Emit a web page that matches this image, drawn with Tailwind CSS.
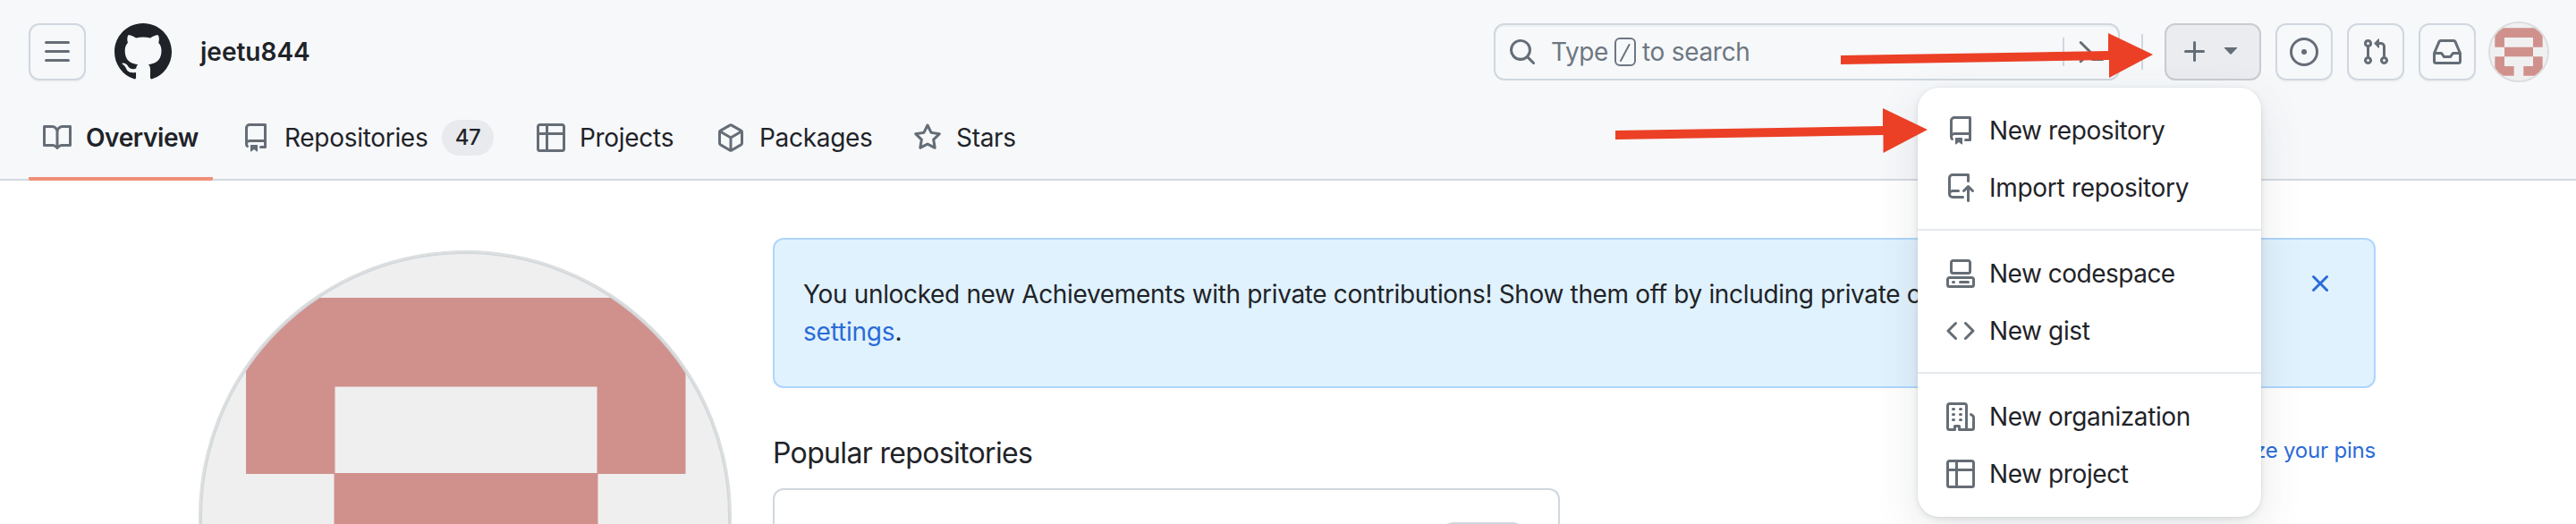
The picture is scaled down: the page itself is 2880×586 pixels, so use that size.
<!DOCTYPE html>
<html lang="en">
<head>
<meta charset="utf-8">
<title>jeetu844</title>
<script src="https://cdn.jsdelivr.net/npm/@tailwindcss/browser@4"></script>
</head>
<body class="relative w-[2880px] h-[586px] overflow-hidden bg-white text-[#1f2328] text-[28px] leading-[42px] font-['Inter',sans-serif]">
<svg class="hidden">
  <symbol id="repo" viewBox="0 0 16 16"><path d="M2 2.5A2.5 2.5 0 0 1 4.5 0h8.75a.75.75 0 0 1 .75.75v12.5a.75.75 0 0 1-.75.75h-2.5a.75.75 0 0 1 0-1.5h1.75v-2h-8a1 1 0 0 0-.714 1.7.75.75 0 1 1-1.072 1.05A2.495 2.495 0 0 1 2 11.5Zm10.500-1h-8a1 1 0 0 0-1 1v6.708A2.486 2.486 0 0 1 4.500 9h8ZM5 12.250a.25.25 0 0 1 .25-.25h3.500a.25.25 0 0 1 .25.25v3.250a.25.25 0 0 1-.4.200l-1.450-1.087a.249.249 0 0 0-.300 0L5.400 15.700a.25.25 0 0 1-.4-.200Z"/></symbol>
  <symbol id="table" viewBox="0 0 16 16"><path d="M0 1.750C0 .784.784 0 1.750 0h12.500C15.216 0 16 .784 16 1.750v12.500A1.750 1.750 0 0 1 14.250 16H1.750A1.750 1.750 0 0 1 0 14.250ZM6.500 6.500v8h7.750a.25.25 0 0 0 .25-.25V6.500Zm8-1.500V1.750a.25.25 0 0 0-.25-.25H6.500V5Zm-13 1.500v7.750c0 .138.112.25.25.25H5v-8ZM5 5V1.500H1.750a.25.25 0 0 0-.25.25V5Z"/></symbol>
</svg>

<header class="h-[202px] bg-[#f6f8fa] border-b-2 border-[#d3d9df] pt-[26px]">
  <div class="flex items-center h-16 pl-8 pr-8">
    <button class="size-16 shrink-0 rounded-xl border-2 border-[#d0d7de] flex items-center justify-center shadow-[0_2px_0_rgba(31,35,40,0.03)]">
      <svg class="size-8 fill-[#656d76]" viewBox="0 0 16 16"><path d="M1 2.750A.75.75 0 0 1 1.750 2h12.500a.75.75 0 0 1 0 1.500H1.750A.75.75 0 0 1 1 2.750Zm0 5A.75.75 0 0 1 1.750 7h12.500a.75.75 0 0 1 0 1.500H1.750A.75.75 0 0 1 1 7.750ZM1.750 12h12.500a.75.75 0 0 1 0 1.500H1.750a.75.75 0 0 1 0-1.500Z"/></svg>
    </button>
    <svg class="size-16 shrink-0 ml-8 fill-[#1f2328]" viewBox="0 0 16 16"><path d="M8 0c4.420 0 8 3.580 8 8a8.013 8.013 0 0 1-5.450 7.590c-.4.080-.55-.17-.55-.38 0-.27.010-1.130.010-2.200 0-.75-.25-1.230-.54-1.480 1.780-.2 3.650-.88 3.650-3.950 0-.88-.31-1.590-.82-2.150.080-.2.360-1.020-.080-2.120 0 0-.67-.22-2.200.82-.64-.18-1.320-.27-2-.27-.68 0-1.360.090-2 .27-1.530-1.030-2.200-.82-2.200-.82-.44 1.100-.16 1.920-.080 2.120-.51.560-.82 1.280-.82 2.150 0 3.060 1.860 3.750 3.640 3.950-.23.200-.44.550-.51 1.070-.46.210-1.610.550-2.330-.66-.15-.24-.6-.83-1.230-.82-.67.010-.27.380.010.530.340.190.730.900.820 1.130.160.450.680 1.310 2.690.940 0 .67.010 1.300.010 1.490 0 .21-.15.450-.55.380A7.995 7.995 0 0 1 0 8c0-4.420 3.580-8 8-8Z"/></svg>
    <span class="ml-8 font-semibold">jeetu844</span>

    <div class="ml-auto flex items-center">
      <div class="w-[700px] h-16 rounded-xl border-2 border-[#d0d7de] shadow-[inset_0_2px_0_rgba(208,215,222,0.2)] flex items-center pl-[14px] pr-[14px] text-[#6e7781]">
        <svg class="size-8 fill-[#656d76]" viewBox="0 0 16 16"><path d="M10.680 11.740a6 6 0 0 1-7.922-8.982 6 6 0 0 1 8.982 7.922l3.040 3.040a.749.749 0 0 1-.326 1.275.749.749 0 0 1-.734-.215ZM11.500 7a4.499 4.499 0 1 0-8.997 0A4.499 4.499 0 0 0 11.500 7Z"/></svg>
        <span class="ml-4 w-[71px] tracking-[-0.4px]">Type</span>
        <svg class="w-6 h-8 shrink-0" viewBox="0 0 24 32" fill="none" stroke="#6e7781" stroke-width="2"><rect x="1" y="1" width="22" height="30" rx="5"/><path d="M7 26 16.500 8" stroke-linecap="round"/></svg>
        <span class="ml-[7px] tracking-[-0.3px] whitespace-nowrap">to search</span>
        <span class="ml-auto w-0.5 h-8 bg-[#d0d7de]"></span>
        <svg class="size-8 ml-[14px] fill-[#656d76]" viewBox="0 0 16 16"><path d="m6.354 8.040-4.773 4.773a.75.75 0 1 0 1.061 1.060L7.945 8.570a.75.75 0 0 0 0-1.060L2.642 2.206a.75.75 0 0 0-1.060 1.061L6.353 8.040ZM8.750 11.500a.75.75 0 0 0 0 1.500h5.500a.75.75 0 0 0 0-1.500h-5.500Z"/></svg>
      </div>
      <span class="ml-6 w-0.5 h-10 bg-[#d0d7de]"></span>
      <button class="ml-6 w-[108px] h-16 rounded-xl border-2 border-[#c9cbd0] bg-[#ebecf0] flex items-center pl-4">
        <svg class="size-8 fill-[#656d76]" viewBox="0 0 16 16"><path d="M7.750 2a.75.75 0 0 1 .75.75V7h4.250a.75.75 0 0 1 0 1.500H8.500v4.250a.75.75 0 0 1-1.500 0V8.500H2.750a.75.75 0 0 1 0-1.500H7V2.750A.75.75 0 0 1 7.750 2Z"/></svg>
        <svg class="size-8 ml-2 mb-1.5 fill-[#656d76]" viewBox="0 0 16 16"><path d="m4.427 7.427 3.396 3.396a.25.25 0 0 0 .354 0l3.396-3.396A.25.25 0 0 0 11.396 7H4.604a.25.25 0 0 0-.177.427Z"/></svg>
      </button>
      <button class="ml-4 size-16 rounded-xl border-2 border-[#d0d7de] flex items-center justify-center shadow-[0_2px_0_rgba(31,35,40,0.03)]">
        <svg class="size-8 fill-[#656d76]" viewBox="0 0 16 16"><path d="M8 9.500a1.500 1.500 0 1 0 0-3 1.500 1.500 0 0 0 0 3Z"/><path d="M8 0a8 8 0 1 1 0 16A8 8 0 0 1 8 0ZM1.500 8a6.500 6.500 0 1 0 13 0 6.500 6.500 0 0 0-13 0Z"/></svg>
      </button>
      <button class="ml-4 size-16 rounded-xl border-2 border-[#d0d7de] flex items-center justify-center shadow-[0_2px_0_rgba(31,35,40,0.03)]">
        <svg class="size-8 fill-[#656d76]" viewBox="0 0 16 16"><path d="M1.500 3.250a2.250 2.250 0 1 1 3 2.122v5.256a2.251 2.251 0 1 1-1.500 0V5.372A2.250 2.250 0 0 1 1.500 3.250Zm5.677-.177L9.573.677A.25.25 0 0 1 10 .854V2.500h1A2.500 2.500 0 0 1 13.500 5v5.628a2.251 2.251 0 1 1-1.500 0V5a1 1 0 0 0-1-1h-1v1.646a.25.25 0 0 1-.427.177L7.177 3.427a.25.25 0 0 1 0-.354ZM3.750 2.500a.75.75 0 1 0 0 1.500.75.75 0 0 0 0-1.500Zm0 9.500a.75.75 0 1 0 0 1.500.75.75 0 0 0 0-1.500Zm8.250.750a.75.75 0 1 0 1.500 0 .75.75 0 0 0-1.500 0Z"/></svg>
      </button>
      <button class="ml-4 size-16 rounded-xl border-2 border-[#d0d7de] flex items-center justify-center shadow-[0_2px_0_rgba(31,35,40,0.03)]">
        <svg class="size-8 fill-[#656d76]" viewBox="0 0 16 16"><path d="M2.800 2.060A1.750 1.750 0 0 1 4.410 1h7.180c.7 0 1.333.417 1.610 1.060l2.740 6.395c.04.093.060.194.060.295v4.500A1.750 1.750 0 0 1 14.250 15H1.750A1.750 1.750 0 0 1 0 13.250v-4.500c0-.101.020-.202.060-.295Zm1.610.440a.25.25 0 0 0-.23.152L1.887 8H4.750a.75.75 0 0 1 .6.300L6.625 10h2.750l1.275-1.700a.75.75 0 0 1 .6-.300h2.863L11.820 2.652a.25.25 0 0 0-.23-.152Zm10.090 7h-2.875l-1.275 1.700a.75.75 0 0 1-.6.300h-3.500a.75.75 0 0 1-.6-.300L4.375 9.500H1.500v3.750c0 .138.112.25.25.25h12.500a.25.25 0 0 0 .25-.25Z"/></svg>
      </button>
      <div class="ml-4 size-16 shrink-0 rounded-full overflow-hidden ring-2 ring-[#dadcde]">
        <svg class="size-16" viewBox="0 0 420 420"><path fill="#f0f0f0" d="M0 0h420v420H0z"/><path fill="#d0918d" d="M35 35h350v140h-70v-70H105v70H35ZM105 175h210v70H105ZM35 245h70v70h70v70H35ZM315 245h70v140H245v-70h70Z"/></svg>
      </div>
    </div>
  </div>

  <nav class="flex h-[112px] pl-8 gap-4">
    <a class="w-[206px] px-4 flex items-center pt-5 border-b-4 border-[#f18e79] font-semibold rounded-b-xs whitespace-nowrap">
      <svg class="size-8 mr-4 shrink-0 fill-[#656d76]" viewBox="0 0 16 16"><path d="M0 1.750A.75.75 0 0 1 .75 1h4.253c1.227 0 2.317.590 3 1.501A3.743 3.743 0 0 1 11.006 1h4.245a.75.75 0 0 1 .75.75v10.500a.75.75 0 0 1-.75.75h-4.507a2.250 2.250 0 0 0-1.591.659l-.622.621a.75.75 0 0 1-1.060 0l-.622-.621A2.250 2.250 0 0 0 5.258 13H.750a.75.75 0 0 1-.750-.75Zm7.251 10.324.004-5.073-.002-2.253A2.250 2.250 0 0 0 5.003 2.500H1.500v9h3.757a3.750 3.750 0 0 1 1.994.574ZM8.755 4.750l-.004 7.322a3.752 3.752 0 0 1 1.992-.572H14.500v-9h-3.495a2.250 2.250 0 0 0-2.250 2.250Z"/></svg>
      <span class="tracking-[-0.4px]">Overview</span>
    </a>
    <a class="w-[314px] px-4 flex items-center pt-5 pb-1 whitespace-nowrap">
      <svg class="size-8 mr-4 shrink-0 fill-[#656d76]"><use href="#repo"/></svg>
      <span class="w-[160px] tracking-[-0.3px]">Repositories</span>
      <span class="ml-4 w-[58px] h-10 rounded-full bg-[#e8eaed] text-2xl leading-10 font-medium text-center tracking-[-0.5px]">47</span>
    </a>
    <a class="w-[185px] px-4 flex items-center pt-5 pb-1 whitespace-nowrap">
      <svg class="size-8 mr-4 shrink-0 fill-[#656d76]"><use href="#table"/></svg>
      <span class="tracking-[-0.3px]">Projects</span>
    </a>
    <a class="w-[204px] px-4 flex items-center pt-5 pb-1 whitespace-nowrap">
      <svg class="size-8 mr-4 shrink-0 fill-[#656d76]" viewBox="0 0 16 16"><path d="m8.878.392 5.250 3.045c.540.314.872.890.872 1.514v6.098a1.750 1.750 0 0 1-.872 1.514l-5.250 3.045a1.750 1.750 0 0 1-1.756 0l-5.250-3.045A1.750 1.750 0 0 1 1 11.049V4.951c0-.624.332-1.201.872-1.514L7.122.392a1.750 1.750 0 0 1 1.756 0ZM7.875 1.690l-4.630 2.685L8 7.133l4.755-2.758-4.630-2.685a.248.248 0 0 0-.25 0ZM2.500 5.677v5.372c0 .090.047.171.125.216l4.625 2.683V8.432Zm6.250 8.271 4.625-2.683a.25.25 0 0 0 .125-.216V5.677L8.750 8.432Z"/></svg>
      <span class="tracking-[-0.3px]">Packages</span>
    </a>
    <a class="px-4 flex items-center pt-5 pb-1 whitespace-nowrap">
      <svg class="size-8 mr-4 shrink-0 fill-[#656d76]" viewBox="0 0 16 16"><path d="M8 .25a.75.75 0 0 1 .673.418l1.882 3.815 4.210.612a.75.75 0 0 1 .416 1.279l-3.046 2.970.719 4.192a.751.751 0 0 1-1.088.791L8 12.347l-3.766 1.980a.75.75 0 0 1-1.088-.790l.720-4.194L.818 6.374a.75.75 0 0 1 .416-1.280l4.210-.611L7.327.668A.75.75 0 0 1 8 .25Zm0 2.445L6.615 5.500a.75.75 0 0 1-.564.410l-3.097.450 2.240 2.184a.75.75 0 0 1 .216.664l-.528 3.084 2.769-1.456a.75.75 0 0 1 .698 0l2.770 1.456-.53-3.084a.75.75 0 0 1 .216-.664l2.240-2.183-3.096-.450a.75.75 0 0 1-.564-.41L8 2.694Z"/></svg>
      <span class="tracking-[-0.3px]">Stars</span>
    </a>
  </nav>
</header>

<main class="flex pl-[222px] h-[384px] overflow-hidden">
  <svg class="w-[596px] h-[306px] mt-[78px] shrink-0" viewBox="222 280 596 306">
    <clipPath id="round"><circle cx="520" cy="578" r="296"/></clipPath>
    <g clip-path="url(#round)"><path fill="#efefef" d="M222 280h596v306H222z"/><path fill="#d0918d" d="M275 333h491.500v197H667.500v-97.500H374.500V530H275ZM373.500 529h295v57h-295Z"/></g>
    <circle cx="520" cy="578" r="297" fill="none" stroke="#dcdede" stroke-width="2"/>
    <circle cx="520" cy="578" r="295" fill="none" stroke="#d3d8dd" stroke-width="2"/>
  </svg>
  <section class="ml-[46px] w-[1792px] pt-16">
    <div class="h-[168px] rounded-xl border-2 border-[#aed6fb] bg-[#e0f2fd] pt-10 pl-8 pr-[44px] flex justify-between">
      <p class="whitespace-nowrap"><span class="tracking-[-0.34px]">You unlocked new Achievements with private contributions! Show them off by including private c</span><br><a class="text-[#2a6bd8] tracking-[-0.2px]">settings</a>.</p>
      <svg class="size-8 shrink-0 -mt-[7px] fill-[#2a6bd8]" viewBox="0 0 16 16"><path d="M3.720 3.720a.75.75 0 0 1 1.060 0L8 6.940l3.220-3.220a.749.749 0 0 1 1.275.326.749.749 0 0 1-.215.734L9.060 8l3.220 3.220a.749.749 0 0 1-.326 1.275.749.749 0 0 1-.734-.215L8 9.060l-3.220 3.220a.751.751 0 0 1-1.042-.018.751.751 0 0 1-.018-1.042L6.940 8 3.720 4.780a.75.75 0 0 1 0-1.060Z"/></svg>
    </div>
    <div class="mt-12 h-12 flex items-center justify-between">
      <h2 class="text-[32px] leading-[48px] pt-0.5 tracking-[-0.66px]">Popular repositories</h2>
      <a class="text-2xl leading-9 -mt-1 tracking-[-0.2px] text-[#2a6bd8]">Customize your pins</a>
    </div>
    <div class="mt-4 w-[880px] h-[60px] rounded-t-xl border-2 border-b-0 border-[#d0d7de] flex justify-end pr-8 pt-9">
      <span class="w-[104px] h-10 rounded-full border-2 border-[#d0d7de]"></span>
    </div>
  </section>
</main>

<div class="absolute left-[2144px] top-[98px] w-[384px] h-[480px] rounded-3xl bg-white py-4 shadow-[0_0_0_1px_rgba(140,149,159,0.06),0_2px_6px_rgba(66,74,83,0.12),0_16px_48px_rgba(66,74,83,0.13)] tracking-[-0.4px]">
  <a class="h-16 pl-8 flex items-center gap-4"><svg class="size-8 fill-[#656d76]"><use href="#repo"/></svg>New repository</a>
  <a class="h-16 pl-8 flex items-center gap-4 tracking-[-0.3px]"><svg class="size-8 fill-[#656d76]" viewBox="0 0 16 16"><path d="M1 2.500A2.500 2.500 0 0 1 3.500 0h8.750a.75.75 0 0 1 .75.75v3.500a.75.75 0 0 1-1.500 0V1.500h-8a1 1 0 0 0-1 1v6.708A2.493 2.493 0 0 1 3.500 9h3.250a.75.75 0 0 1 0 1.500H3.500a1 1 0 0 0 0 2h5.750a.75.75 0 0 1 0 1.500H3.500A2.500 2.500 0 0 1 1 11.500Zm13.230 7.790-1.230-1.224v6.184a.75.75 0 0 1-1.500 0V9.066l-1.224 1.224a.75.75 0 0 1-1.060-1.060l2.504-2.504a.75.75 0 0 1 1.060 0L15.290 9.230a.751.751 0 0 1-.018 1.042.751.751 0 0 1-1.042.018Z"/></svg>Import repository</a>
  <div class="mt-3.5 mb-4 h-0.5 bg-[#e6eaee]"></div>
  <a class="h-16 pl-8 flex items-center gap-4 tracking-[-0.5px]"><svg class="size-8 fill-[#656d76]" viewBox="0 0 16 16"><path d="M0 11.250c0-.966.784-1.750 1.750-1.750h12.500c.966 0 1.750.784 1.750 1.750v3A1.750 1.750 0 0 1 14.250 16H1.750A1.750 1.750 0 0 1 0 14.250Zm2-9.500C2 .784 2.784 0 3.750 0h8.500C13.216 0 14 .784 14 1.750v5a1.750 1.750 0 0 1-1.750 1.750h-8.500A1.750 1.750 0 0 1 2 6.750Zm1.750-.25a.25.25 0 0 0-.25.25v5c0 .138.112.25.25.25h8.500a.25.25 0 0 0 .25-.25v-5a.25.25 0 0 0-.25-.25Zm-2 9.500a.25.25 0 0 0-.25.25v3c0 .138.112.25.25.25h12.500a.25.25 0 0 0 .25-.25v-3a.25.25 0 0 0-.25-.25Z"/><path d="M7 12.750a.75.75 0 0 1 .75-.75h4.500a.75.75 0 0 1 0 1.500h-4.500a.75.75 0 0 1-.75-.75Zm-4 0a.75.75 0 0 1 .75-.75h.5a.75.75 0 0 1 0 1.500h-.5a.75.75 0 0 1-.75-.75Z"/></svg>New codespace</a>
  <a class="h-16 pl-8 flex items-center gap-4"><svg class="size-8 fill-[#656d76]" viewBox="0 0 16 16"><path d="m11.280 3.220 4.250 4.250a.75.75 0 0 1 0 1.060l-4.250 4.250a.749.749 0 0 1-1.275-.326.749.749 0 0 1 .215-.734L13.940 8l-3.720-3.720a.749.749 0 0 1 .326-1.275.749.749 0 0 1 .734.215Zm-6.560 0a.751.751 0 0 1 1.042.018.751.751 0 0 1 .018 1.042L2.060 8l3.720 3.720a.749.749 0 0 1-.326 1.275.749.749 0 0 1-.734-.215L.470 8.530a.75.75 0 0 1 0-1.060Z"/></svg>New gist</a>
  <div class="mt-3.5 mb-4 h-0.5 bg-[#e6eaee]"></div>
  <a class="h-16 pl-8 flex items-center gap-4"><svg class="size-8 fill-[#656d76]" viewBox="0 0 16 16"><path d="M1.750 16A1.750 1.750 0 0 1 0 14.250V1.750C0 .784.784 0 1.750 0h8.500C11.216 0 12 .784 12 1.750v12.500c0 .085-.006.168-.018.250h2.268a.25.25 0 0 0 .25-.25V8.285a.25.25 0 0 0-.111-.208l-1.055-.703a.749.749 0 1 1 .832-1.248l1.055.703c.487.325.779.871.779 1.456v5.965A1.750 1.750 0 0 1 14.250 16h-3.500a.766.766 0 0 1-.197-.026c-.099.017-.200.026-.303.026h-3a.75.75 0 0 1-.75-.75V14h-1v1.250a.75.75 0 0 1-.75.75Zm-.25-1.750c0 .138.112.25.25.25H4v-1.250a.75.75 0 0 1 .75-.75h2.500a.75.75 0 0 1 .75.75v1.250h2.250a.25.25 0 0 0 .25-.25V1.750a.25.25 0 0 0-.25-.25h-8.500a.25.25 0 0 0-.25.25ZM3.750 6h.5a.75.75 0 0 1 0 1.500h-.5a.75.75 0 0 1 0-1.500ZM3 3.750A.75.75 0 0 1 3.750 3h.5a.75.75 0 0 1 0 1.500h-.5A.75.75 0 0 1 3 3.750Zm4 3A.75.75 0 0 1 7.750 6h.5a.75.75 0 0 1 0 1.500h-.5A.75.75 0 0 1 7 6.750ZM7.750 3h.5a.75.75 0 0 1 0 1.500h-.5a.75.75 0 0 1 0-1.500ZM3 9.750A.75.75 0 0 1 3.750 9h.5a.75.75 0 0 1 0 1.500h-.5A.75.75 0 0 1 3 9.750ZM7.750 9h.5a.75.75 0 0 1 0 1.500h-.5a.75.75 0 0 1 0-1.500Z"/></svg>New organization</a>
  <a class="h-16 pl-8 flex items-center gap-4"><svg class="size-8 fill-[#656d76]"><use href="#table"/></svg>New project</a>
</div>

<svg class="absolute left-0 top-0 w-[2880px] h-[586px] pointer-events-none fill-[#eb4026]" viewBox="0 0 2880 586">
  <path d="M2058 62 2357 57V37L2407 61 2358 87V67L2058 72Z"/>
  <path d="M1806 146 2105 141V121L2155 145 2105.500 171V151L1806 156Z"/>
</svg>
</body>
</html>
